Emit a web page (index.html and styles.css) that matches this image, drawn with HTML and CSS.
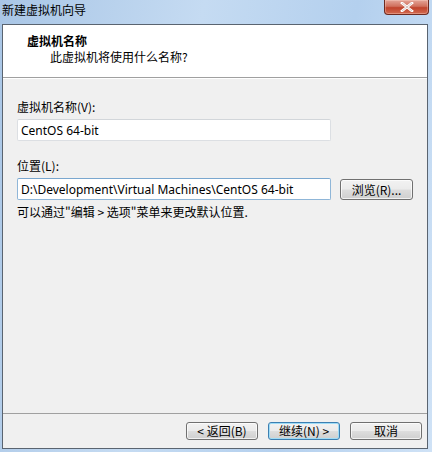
FILE: index.html
```html
<!DOCTYPE html>
<html lang="zh-CN">
<head>
<meta charset="utf-8">
<title>新建虚拟机向导</title>
<link rel="stylesheet" href="styles.css">
</head>
<body>
<div class="window">
  <div class="titlebar">
    <span class="title">新建虚拟机向导</span>
    <button class="close" aria-label="关闭">
      <svg width="14" height="10" viewBox="0 0 14 10"><path d="M2 1 L12 9 M12 1 L2 9" stroke="#fff" stroke-width="2.6" stroke-linecap="square"/><path d="M2 1 L12 9 M12 1 L2 9" stroke="#7a3a30" stroke-width="0.6" fill="none" opacity="0.5"/></svg>
    </button>
  </div>
  <div class="client">
    <div class="header">
      <div class="h-title">虚拟机名称</div>
      <div class="h-sub">此虚拟机将使用什么名称?</div>
    </div>
    <div class="content">
      <label class="label first">虚拟机名称(V):</label>
      <div class="row">
        <input class="field" type="text" value="CentOS 64-bit">
      </div>
      <label class="label second">位置(L):</label>
      <div class="row">
        <input class="field focused" type="text" value="D:\Development\Virtual Machines\CentOS 64-bit">
        <button class="btn browse">浏览(R)...</button>
      </div>
      <div class="hint">可以通过"编辑 &gt; 选项"菜单来更改默认位置.</div>
    </div>
    <div class="footer">
      <button class="btn">&lt; 返回(B)</button>
      <button class="btn default">继续(N) &gt;</button>
      <button class="btn cancel">取消</button>
    </div>
  </div>
</div>
</body>
</html>
```
FILE: styles.css
```css
* { box-sizing: border-box; }
html, body { margin: 0; padding: 0; }
body {
  width: 432px;
  height: 452px;
  overflow: hidden;
  font-family: "Noto Sans CJK SC", "Noto Sans", sans-serif;
  font-size: 12px;
  color: #000;
  background: linear-gradient(100deg, #a9c6e6 0%, #c5dbf2 40%, #b4d0ee 70%, #cfe2f6 100%);
}
.window {
  width: 432px;
  height: 452px;
  display: flex;
  flex-direction: column;
}
.titlebar {
  height: 24px;
  position: relative;
  display: flex;
  align-items: flex-start;
  padding: 2px 0 0 2px;
}
.title {
  font-size: 12px;
  line-height: 16px;
  color: #000;
}
.close {
  position: absolute;
  right: 3px;
  top: 0;
  width: 45px;
  height: 15px;
  border: 1px solid #6d2a20;
  border-top: none;
  border-radius: 0 0 4px 4px;
  background: linear-gradient(#e4a598 0%, #d0705d 45%, #c0432c 55%, #d26a50 100%);
  padding: 0;
  display: flex;
  align-items: center;
  justify-content: center;
  box-shadow: inset 0 0 0 1px rgba(255,220,210,0.35);
}
.client {
  flex: 1;
  margin: 0 4px 3px 2px;
  border: 1px solid #5a6470;
  background: #f0f0f0;
  display: flex;
  flex-direction: column;
}
.header {
  height: 53px;
  background: #fff;
  border-bottom: 1px solid #a0a0a0;
  box-shadow: 0 1px 0 #fff;
  padding: 8px 0 0 24px;
}
.h-title {
  font-weight: bold;
  line-height: 16px;
}
.h-sub {
  line-height: 16px;
  padding-left: 23px;
}
.content {
  flex: 1;
  padding: 21px 0 0 14px;
  display: flex;
  flex-direction: column;
}
.label {
  line-height: 16px;
  display: block;
}
.label.second { margin-top: 17px; }
.row {
  display: flex;
  align-items: center;
  gap: 9px;
  margin-top: 4px;
}
.field {
  width: 314px;
  height: 22px;
  border: 1px solid #dcdfe3;
  border-top-color: #d2d6da;
  border-radius: 2px;
  background: #fff;
  font-family: "Noto Sans", "Noto Sans CJK SC", sans-serif;
  font-size: 12px;
  padding: 0 0 0 3px;
  color: #000;
  outline: none;
}
.field.focused {
  border-color: #8fb6d8;
  border-top-color: #7aa7cf;
}
.btn {
  height: 21px;
  border: 1px solid #707070;
  border-radius: 3px;
  background: linear-gradient(#f2f2f2 0%, #ebebeb 48%, #dddddd 52%, #cfcfcf 100%);
  box-shadow: inset 0 0 0 1px rgba(255,255,255,0.7);
  font-family: "Noto Sans CJK SC", "Noto Sans", sans-serif;
  font-size: 12px;
  line-height: 17px;
  padding: 0;
  color: #000;
}
.browse { width: 73px; }
.hint {
  margin-top: 4px;
  line-height: 16px;
}
.footer {
  height: 35px;
  border-top: 1px solid #a0a0a0;
  display: flex;
  align-items: flex-start;
  justify-content: flex-end;
  gap: 10px;
  padding: 8px 5px 0 0;
}
.footer .btn {
  width: 72px;
  height: 18px;
  line-height: 14px;
}
.footer .default {
  border-color: #3c7fb1;
  box-shadow: inset 0 0 0 1px #9edcf7;
}
```
